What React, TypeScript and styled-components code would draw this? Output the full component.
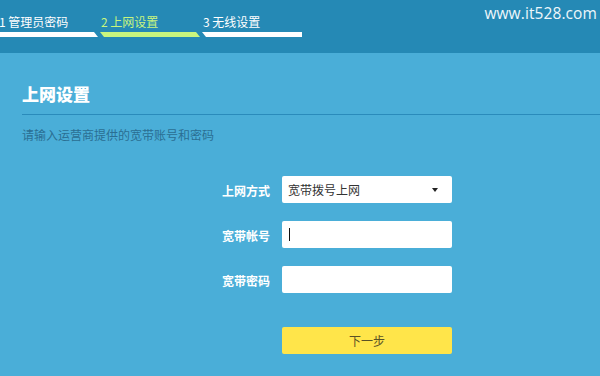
import React from "react";
import styled, { createGlobalStyle } from "styled-components";

const GlobalStyle = createGlobalStyle`
  html, body { margin: 0; padding: 0; }
  body {
    width: 600px;
    height: 376px;
    overflow: hidden;
    background: #4aaed8;
    font-family: "Noto Sans CJK SC", "Noto Sans", sans-serif;
  }
  #root { width: 600px; height: 376px; }
`;

const Page = styled.div`
  width: 600px;
  height: 376px;
  display: flex;
  flex-direction: column;
  background: #4aaed8;
`;

const Header = styled.header`
  height: 53px;
  flex: none;
  background: #2589b5;
  display: flex;
  justify-content: space-between;
  align-items: flex-start;
`;

const Steps = styled.nav`
  display: flex;
  gap: 2px;
  margin-left: -2px;
  padding-top: 15px;
`;

const Step = styled.div<{ $active?: boolean }>`
  width: 100px;
  display: flex;
  flex-direction: column;
  color: ${(p) => (p.$active ? "#c8f57e" : "#ffffff")};
  font-size: 12px;
  line-height: 14px;
  white-space: nowrap;
`;

const StepLabel = styled.span`
  padding-left: 1px;
`;

const StepBar = styled.span<{ $active?: boolean; $last?: boolean; $first?: boolean }>`
  display: block;
  height: 5px;
  margin-top: 3px;
  background: ${(p) => (p.$active ? "#c8f57e" : "#ffffff")};
  clip-path: ${(p) =>
    p.$last
      ? "polygon(0 0, 100% 0, 100% 100%, 4px 100%)"
      : p.$first
      ? "polygon(0 0, calc(100% - 4px) 0, 100% 100%, 0 100%)"
      : "polygon(0 0, calc(100% - 4px) 0, 100% 100%, 4px 100%)"};
`;

const Watermark = styled.div`
  font-family: "Open Sans", "Noto Sans", sans-serif;
  font-size: 15.5px;
  line-height: 18px;
  color: #eef7fb;
  padding-top: 4px;
  padding-right: 3px;
  letter-spacing: 0.1px;
`;

const Main = styled.main`
  flex: 1;
  padding: 30px 0 0 22px;
  display: flex;
  flex-direction: column;
`;

const Title = styled.h1`
  margin: 0;
  font-size: 17px;
  line-height: 22px;
  font-weight: 900;
  color: #ffffff;
  padding-bottom: 9px;
  border-bottom: 1px solid #2a8bbb;
`;

const Hint = styled.p`
  margin: 12px 0 0;
  font-size: 12px;
  line-height: 16px;
  color: #2a6e93;
`;

const Form = styled.div`
  display: grid;
  grid-template-columns: 248px 170px;
  column-gap: 12px;
  row-gap: 18px;
  margin-top: 33px;
  align-items: center;
`;

const Label = styled.label`
  text-align: right;
  font-size: 12px;
  font-weight: 700;
  color: #ffffff;
  line-height: 16px;
  padding-top: 2px;
`;

const Field = styled.div`
  height: 27px;
  box-sizing: border-box;
  background: #ffffff;
  border-radius: 2px;
  display: flex;
  align-items: center;
  padding: 0 6px;
  font-size: 12px;
  color: #333333;
`;

const SelectText = styled.span`
  flex: 1;
`;

const Caret = styled.span`
  width: 0;
  height: 0;
  border-left: 3px solid transparent;
  border-right: 3px solid transparent;
  border-top: 4px solid #222222;
  margin-right: 8px;
  margin-top: 1px;
`;

const TextCursor = styled.span`
  width: 1px;
  height: 13px;
  background: #111111;
  margin-left: 1px;
`;

const Spacer = styled.span``;

const Button = styled.button`
  grid-column: 2;
  margin-top: 16px;
  height: 27px;
  border: none;
  border-radius: 2px;
  background: #ffe54a;
  color: #5a5226;
  font-family: "Noto Sans CJK SC", "Noto Sans", sans-serif;
  font-size: 12px;
  padding: 0;
  cursor: pointer;
`;

export default function App() {
  return (
    <>
      <GlobalStyle />
      <Page>
        <Header>
          <Steps>
            <Step>
              <StepLabel>1 管理员密码</StepLabel>
              <StepBar $first />
            </Step>
            <Step $active>
              <StepLabel>2 上网设置</StepLabel>
              <StepBar $active />
            </Step>
            <Step>
              <StepLabel>3 无线设置</StepLabel>
              <StepBar $last />
            </Step>
          </Steps>
          <Watermark>www.it528.com</Watermark>
        </Header>
        <Main>
          <Title>上网设置</Title>
          <Hint>请输入运营商提供的宽带账号和密码</Hint>
          <Form>
            <Label>上网方式</Label>
            <Field>
              <SelectText>宽带拨号上网</SelectText>
              <Caret />
            </Field>
            <Label>宽带帐号</Label>
            <Field>
              <TextCursor />
            </Field>
            <Label>宽带密码</Label>
            <Field />
            <Spacer />
            <Button>下一步</Button>
          </Form>
        </Main>
      </Page>
    </>
  );
}
